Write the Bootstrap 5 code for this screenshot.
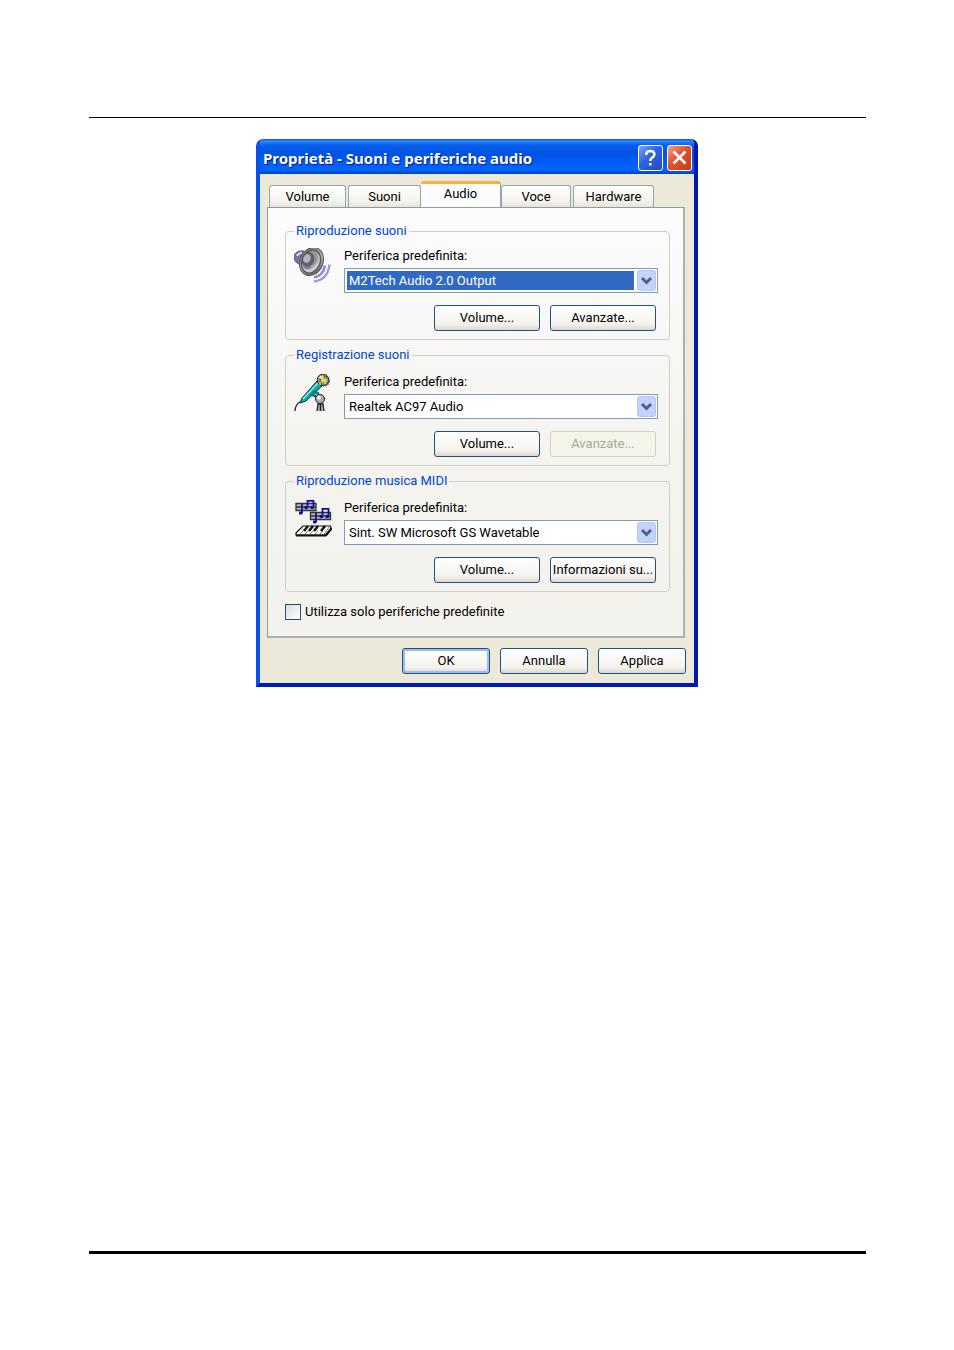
<!DOCTYPE html>
<html lang="it">
<head>
<meta charset="utf-8">
<meta name="viewport" content="width=device-width, initial-scale=1">
<title>Proprietà - Suoni e periferiche audio</title>
<link href="https://cdn.jsdelivr.net/npm/bootstrap@5.3.0/dist/css/bootstrap.min.css" rel="stylesheet">
<style>
body { background: #fff; color: #000; font: 13px/16px Roboto, "Liberation Sans", sans-serif; }
.sheet { padding: 117px 88px 96px 89px; }
.sheet-body { border-top: 1px solid #000; border-bottom: 3px solid #000; padding: 21px 1px 0 0; }
.xp-window { max-width: 442px; background: #ece9d8; border: solid #0831d9; border-width: 0 4px 4px; border-color: #0a4fe8 #0019b0 #001bb5 #0a4fe8; border-radius: 7px 7px 0 0; overflow: hidden; }
.xp-title { height: 35px; margin: 0 -4px; padding: 2px 6px 0 7px; background: linear-gradient(#0a50d0 0, #2f8bff 2px, #0a5eec 6px, #0053e1 15px, #005bf5 22px, #0066ff 30px, #0053e0 33px, #0040c8 35px); }
.xp-title h1 { font: bold 15px/20px "Noto Sans", "Open Sans", sans-serif; color: #fff; text-shadow: 1px 1px 1px #0a1883; }
.cap-btn { width: 25px; height: 26px; border: 1px solid #fff; border-radius: 3px; background: linear-gradient(135deg, #7da2f2, #2f62e0 45%, #1f49cf); }
.cap-close { background: linear-gradient(135deg, #f0a088, #e0512f 45%, #c33b12); }
.xp-content { padding: 8px 9px 9px 7px; }
.xp-tabs { padding-left: 2px; height: 25px; }
.xp-tab { height: 22px; border: 1px solid #91a7b4; border-bottom: 0; border-radius: 3px 3px 0 0; background: linear-gradient(#fff, #f4f3ec 70%, #e6e4da); padding: 0; color: #000; }
.tab-a { width: 77px; margin-right: 2px; }
.tab-b { width: 73px; }
.tab-c { width: 70px; margin-right: 2px; }
.tab-d { width: 81px; }
.xp-tab.active { width: 80px; height: 26px; border-top: 3px solid #fcb040; border-left: 0; background: #fcfcfe; border-right-color: #91a7b4; padding-bottom: 3px; z-index: 1; }
.xp-panel { border: 1px solid #919b9c; border-right: 2px solid #a9b1b4; border-bottom: 2px solid #a9b1b4; background: linear-gradient(#fcfcfe, #f4f3ee 60%, #f3f2ec); padding: 15px 13px 16px 17px; }
.xp-groups { gap: 7px; }
.xp-group { border: 1px solid #d0d0bf; border-radius: 4px; padding: 11px 11px 8px 8px; }
.xp-group.first-group { padding-top: 9px; }
.xp-group legend { font-size: 13px; line-height: 16px; color: #0046d5; margin-left: 0; padding: 0 2px; }
.group-row { gap: 12px; }
.group-icon { width: 38px; height: 42px; }
.xp-select { height: 25px; border: 1px solid #7f9db9; border-radius: 0; background: #fff; color: #000; padding: 0 26px 0 4px; appearance: none; }
.xp-select.hot { color: #fff; background: linear-gradient(#316ac5, #316ac5) 2px 2px / calc(100% - 25px) calc(100% - 4px) no-repeat #fff; }
.xp-select option { color: #000; background: #fff; }
.xp-arrow { right: 2px; top: 2px; width: 19px; height: 21px; pointer-events: none; }
.xp-btn { width: 106px; height: 26px; border: 1px solid #1f5286; border-radius: 3px; background: linear-gradient(#fff, #f4f3ee 75%, #dcd8cc); padding: 0; color: #000; white-space: nowrap; }
.xp-btn:disabled { border-color: #d2d1c0; background: #f5f4ea; color: #aca899; }
.btn-row { gap: 10px; margin: 12px 2px 0 0; }
.xp-footer .xp-btn { width: 88px; }
.xp-footer { gap: 10px; padding-top: 10px; margin-right: -1px; }
.xp-btn.default-btn { box-shadow: inset 0 0 0 2px #9ebcf0; }
.xp-check { gap: 4px; padding-top: 12px; }
.xp-check input { appearance: none; width: 16px; height: 16px; margin: 0; border: 1px solid #1c5180; background: linear-gradient(135deg, #dcdcd7, #fff); }
.xp-check input:checked { background: #21a121; }
</style>
</head>
<body>
<main class="sheet min-vh-100 d-flex flex-column">
<div class="sheet-body flex-grow-1">
<section class="xp-window mx-auto" aria-labelledby="dlg">
  <header class="xp-title d-flex align-items-center">
    <h1 id="dlg" class="m-0 flex-grow-1">Proprietà - Suoni e periferiche audio</h1>
    <div class="d-flex gap-1">
      <button type="button" class="cap-btn p-0 d-flex align-items-center justify-content-center" aria-label="Guida">
        <svg width="19" height="20" viewBox="0 0 19 20" fill="none" stroke="#fff" stroke-width="2.4"><path d="M5.3 7V5.800Q5.500 3 9.300 3T13.500 6.200Q13.500 8 11.300 9.500T9.300 13"/><path d="M9.300 15v2.600"/></svg>
      </button>
      <button type="button" class="cap-btn cap-close p-0 d-flex align-items-center justify-content-center" aria-label="Chiudi">
        <svg width="19" height="19" viewBox="0 0 19 19" stroke="#fff" stroke-width="2.600"><path d="M3.500 3.500l12 12M15.500 3.500l-12 12"/></svg>
      </button>
    </div>
  </header>
  <div class="xp-content">
    <div class="xp-tabs d-flex align-items-end" role="tablist">
      <button type="button" role="tab" class="xp-tab tab-a">Volume</button>
      <button type="button" role="tab" class="xp-tab tab-b">Suoni</button>
      <button type="button" role="tab" class="xp-tab active position-relative" aria-selected="true">Audio</button>
      <button type="button" role="tab" class="xp-tab tab-c">Voce</button>
      <button type="button" role="tab" class="xp-tab tab-d">Hardware</button>
    </div>
    <div class="xp-panel">
      <div class="xp-groups d-flex flex-column">
        <fieldset class="xp-group first-group">
          <legend class="float-none w-auto mb-0">Riproduzione suoni</legend>
          <div class="group-row d-flex">
            <svg class="group-icon flex-shrink-0" viewBox="0 0 38 42">
              <defs>
                <linearGradient id="rim" x1="0" y1="0" x2="1" y2="1"><stop offset="0" stop-color="#666"/><stop offset=".5" stop-color="#bbb"/><stop offset="1" stop-color="#444"/></linearGradient>
                <radialGradient id="cone" cx=".4" cy=".4"><stop offset="0" stop-color="#ddd"/><stop offset=".6" stop-color="#8c8c8c"/><stop offset="1" stop-color="#ccc"/></radialGradient>
              </defs>
              <path d="M20 33.500q14-2 15.500-17" fill="none" stroke="#9d99d6" stroke-width="2.500"/>
              <path d="M20 29.500q9.500-2 11-12" fill="none" stroke="#8f8bc8" stroke-width="2.500"/>
              <path d="M10 3Q1 2 0 9q0 6 8 8" fill="#7775a8" stroke="#55537c"/>
              <path d="M3 8q1-3 5-3" fill="none" stroke="#d8d6f4" stroke-width="2"/>
              <ellipse cx="17.500" cy="13.500" rx="11.500" ry="14.500" transform="rotate(24 17.500 13.500)" fill="url(#rim)" stroke="#555"/>
              <ellipse cx="17" cy="13.500" rx="9" ry="12" transform="rotate(24 17 13.500)" fill="url(#cone)" stroke="#555" stroke-width="1.300"/>
              <ellipse cx="14" cy="11.500" rx="5.500" ry="7" transform="rotate(24 14 11.500)" fill="#666" stroke="#555"/>
              <ellipse cx="13" cy="10.500" rx="3.500" ry="4.500" transform="rotate(24 13 10.500)" fill="#b4b3c4"/>
              <path d="M9 17q3 5 8 2" fill="none" stroke="#7b78b8" stroke-width="2"/>
            </svg>
            <div class="flex-grow-1">
              <label for="play" class="d-block mb-1">Periferica predefinita:</label>
              <div class="position-relative">
                <select id="play" class="xp-select hot w-100 d-block"><option>M2Tech Audio 2.0 Output</option></select>
                <svg class="xp-arrow position-absolute" viewBox="0 0 19 21"><rect x=".5" y=".5" width="18" height="20" rx="2" fill="#c3d3fb" stroke="#b5c7f3"/><path d="M5 8l4.500 4.500L14 8" fill="none" stroke="#4d6185" stroke-width="3"/></svg>
              </div>
              <div class="btn-row d-flex justify-content-end">
                <button type="button" class="xp-btn">Volume...</button>
                <button type="button" class="xp-btn">Avanzate...</button>
              </div>
            </div>
          </div>
        </fieldset>
        <fieldset class="xp-group">
          <legend class="float-none w-auto mb-0">Registrazione suoni</legend>
          <div class="group-row d-flex">
            <svg class="group-icon flex-shrink-0" viewBox="0 0 38 42">
              <path d="M1 37q0-6 5-9l3-2" fill="none" stroke="#222" stroke-width="1.300"/>
              <path d="M8 24L23 7l5 5L12 27l-6 2z" fill="#14a8a8" stroke="#063c3c"/>
              <path d="M9 25L24 9" stroke="#80f0f0" stroke-width="1.500"/>
              <path d="M17 20l8 4M19 17l6 3" stroke="#087878" stroke-width="3"/>
              <circle cx="29" cy="5.800" r="5.800" fill="#a09c80" stroke="#222"/>
              <circle cx="30.500" cy="7" r="4.600" fill="none" stroke="#444" stroke-width="1.600" stroke-dasharray="1.500 1"/>
              <path d="M25 4h3v3h3v3M29 2v4h4M26 8v3" fill="none" stroke="#e8e050" stroke-width="1.400"/>
              <path d="M26 3h2" stroke="#fff" stroke-width="1.500"/>
              <circle cx="26" cy="25" r="4.500" fill="#aaa" stroke="#222"/>
              <circle cx="24.800" cy="23.500" r="2" fill="#fff"/>
              <path d="M23 37l1-7h5l1 7M26.500 30v7" fill="#aaa" stroke="#222" stroke-width="1.300"/>
            </svg>
            <div class="flex-grow-1">
              <label for="rec" class="d-block mb-1">Periferica predefinita:</label>
              <div class="position-relative">
                <select id="rec" class="xp-select w-100 d-block"><option>Realtek AC97 Audio</option></select>
                <svg class="xp-arrow position-absolute" viewBox="0 0 19 21"><rect x=".5" y=".5" width="18" height="20" rx="2" fill="#c3d3fb" stroke="#b5c7f3"/><path d="M5 8l4.500 4.500L14 8" fill="none" stroke="#4d6185" stroke-width="3"/></svg>
              </div>
              <div class="btn-row d-flex justify-content-end">
                <button type="button" class="xp-btn">Volume...</button>
                <button type="button" class="xp-btn" disabled>Avanzate...</button>
              </div>
            </div>
          </div>
        </fieldset>
        <fieldset class="xp-group">
          <legend class="float-none w-auto mb-0">Riproduzione musica MIDI</legend>
          <div class="group-row d-flex">
            <svg class="group-icon flex-shrink-0" viewBox="0 0 38 42">
              <path d="M2 3.500h20v7H2zM16.500 12.500h20v7h-20z" fill="#b4b4b4" stroke="#333" stroke-width="1.300"/>
              <path d="M2 7h20M16.500 16h20" stroke="#333" stroke-width="1.300"/>
              <path d="M8 13V4M13.500 7V0.800h6V7M22 22v-9M28.500 16V8.800h6V16" fill="none" stroke="#0a0aa8" stroke-width="1.700"/>
              <path d="M5.500 12H8v2H5.500zM11 6.500h2.500v2H11zM17 6.500h2.500v2H17zM19.500 21H22v2h-2.500zM26 15.500h2.500v2H26zM32 15.500h2.500v2H32z" fill="#0a0aa8" stroke="#0a0aa8"/>
              <path d="M2 33l7-7h27.500l1 3L33 35H2z" fill="#fff" stroke="#111" stroke-width="1.200"/>
              <path d="M2 35.500h29.500l6-7" fill="none" stroke="#111" stroke-width="2.200"/>
              <path d="M6 34l3-3M11 34l3-3M16 34l3-3M21 34l3-3M26 34l3-3M30 34l6-8" stroke="#777" stroke-width="1"/>
              <path d="M10 31l4-5M15 31l4-5M20 31l4-5M27 31l4-5" stroke="#111" stroke-width="2.600"/>
            </svg>
            <div class="flex-grow-1">
              <label for="midi" class="d-block mb-1">Periferica predefinita:</label>
              <div class="position-relative">
                <select id="midi" class="xp-select w-100 d-block"><option>Sint. SW Microsoft GS Wavetable</option></select>
                <svg class="xp-arrow position-absolute" viewBox="0 0 19 21"><rect x=".5" y=".5" width="18" height="20" rx="2" fill="#c3d3fb" stroke="#b5c7f3"/><path d="M5 8l4.500 4.500L14 8" fill="none" stroke="#4d6185" stroke-width="3"/></svg>
              </div>
              <div class="btn-row d-flex justify-content-end">
                <button type="button" class="xp-btn">Volume...</button>
                <button type="button" class="xp-btn">Informazioni su...</button>
              </div>
            </div>
          </div>
        </fieldset>
      </div>
      <div class="xp-check d-flex align-items-center">
        <input type="checkbox" id="only"><label for="only">Utilizza solo periferiche predefinite</label>
      </div>
    </div>
    <div class="xp-footer d-flex justify-content-end">
      <button type="button" class="xp-btn default-btn">OK</button>
      <button type="button" class="xp-btn">Annulla</button>
      <button type="button" class="xp-btn">Applica</button>
    </div>
  </div>
</section>
</div>
</main>
<script src="https://cdn.jsdelivr.net/npm/bootstrap@5.3.0/dist/js/bootstrap.bundle.min.js"></script>
</body>
</html>
